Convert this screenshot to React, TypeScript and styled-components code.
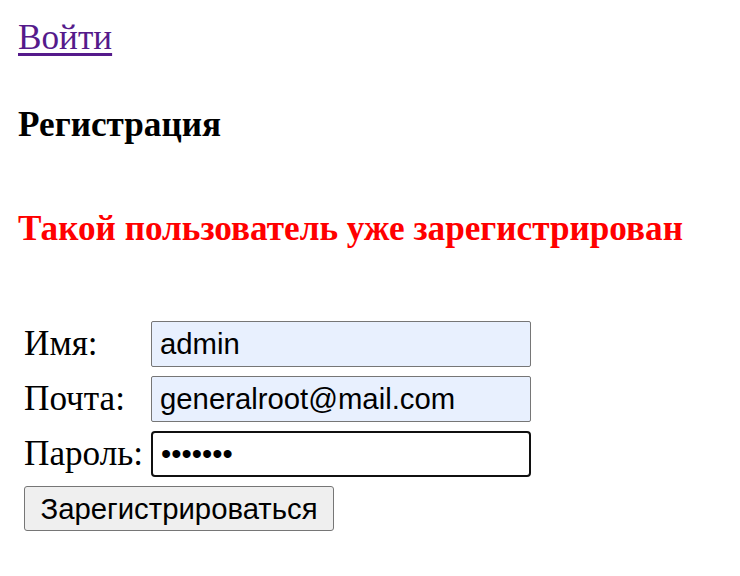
import styled, { createGlobalStyle } from 'styled-components';

const GlobalStyle = createGlobalStyle`
  html, body {
    margin: 0;
    padding: 0;
    background: #ffffff;
  }
  body {
    font-family: "Liberation Serif", "Times New Roman", serif;
    font-size: 35.2px;
    color: #000000;
  }
`;

const Page = styled.div`
  padding: 18px;
`;

const LoginLink = styled.a`
  display: inline-block;
  font-size: 35.2px;
  line-height: 36px;
  color: #551a8b;
  text-decoration: underline;
  text-decoration-thickness: 3px;
  text-underline-offset: 4px;
`;

const Title = styled.h3<{ error?: boolean }>`
  margin: ${(props) => (props.error ? '68px 0 0' : '49px 0 0')};
  font-size: 35.2px;
  line-height: 36px;
  font-weight: bold;
  white-space: nowrap;
  color: ${(props) => (props.error ? '#ff0000' : '#000000')};
`;

const Form = styled.form`
  display: grid;
  grid-template-columns: 127px 380px;
  row-gap: 9px;
  align-items: center;
  margin: 74px 0 0 6px;
`;

const Label = styled.label`
  font-size: 35.2px;
  line-height: 46px;
  white-space: nowrap;
`;

const Field = styled.input<{ autofilled?: boolean }>`
  box-sizing: border-box;
  width: 380px;
  height: 46px;
  margin: 0;
  padding: 0 8px;
  font-family: "Liberation Sans", Arial, sans-serif;
  font-size: 29.3px;
  color: #000000;
  background: ${(props) => (props.autofilled ? '#e8f0fe' : '#ffffff')};
  border: ${(props) => (props.autofilled ? '1.5px solid #767676' : '2.5px solid #101010')};
  border-radius: ${(props) => (props.autofilled ? '2px' : '4px')};
  outline: none;
`;

const SubmitButton = styled.button`
  grid-column: 1 / span 2;
  justify-self: start;
  box-sizing: border-box;
  width: 310px;
  height: 45px;
  margin: 0;
  padding: 0 14px;
  font-family: "Liberation Sans", Arial, sans-serif;
  font-size: 29.3px;
  color: #000000;
  background: #efefef;
  border: 1.5px solid #767676;
  border-radius: 3px;
`;

export default function App() {
  return (
    <Page>
      <GlobalStyle />
      <LoginLink href="#login">Войти</LoginLink>
      <Title>Регистрация</Title>
      <Title error>Такой пользователь уже зарегистрирован</Title>
      <Form onSubmit={(e) => e.preventDefault()}>
        <Label htmlFor="name">Имя:</Label>
        <Field id="name" autofilled readOnly defaultValue="admin" />
        <Label htmlFor="email">Почта:</Label>
        <Field id="email" autofilled readOnly defaultValue="generalroot@mail.com" />
        <Label htmlFor="password">Пароль:</Label>
        <Field id="password" type="password" readOnly defaultValue="1234567" />
        <SubmitButton type="submit">Зарегистрироваться</SubmitButton>
      </Form>
    </Page>
  );
}
